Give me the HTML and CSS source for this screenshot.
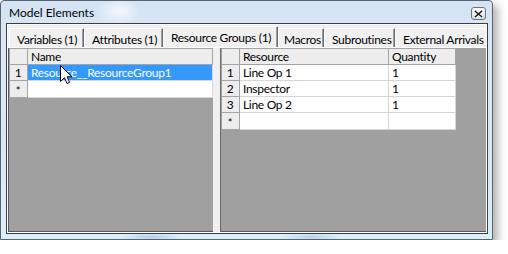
FILE: index.html
```html
<!DOCTYPE html>
<html>
<head>
<meta charset="utf-8">
<link rel="stylesheet" href="styles.css">
</head>
<body>
<div class="window">
  <div class="titlebar">
    <span class="title">Model Elements</span>
    <span class="close"><svg width="9" height="8" viewBox="0 0 9 8"><path d="M1.5 1.5 L7.5 6.5 M7.5 1.5 L1.5 6.5" stroke="#fff" stroke-width="3.4" stroke-linecap="square"/><path d="M1.5 1.5 L7.5 6.5 M7.5 1.5 L1.5 6.5" stroke="#222" stroke-width="1.6" stroke-linecap="square"/></svg></span>
  </div>
  <div class="client">
    <div class="frame">
      <div class="tabs">
        <div class="tab t1">Variables (1)</div>
        <div class="tab t2">Attributes (1)</div>
        <div class="tab t3 active">Resource Groups (1)</div>
        <div class="tab t4">Macros</div>
        <div class="tab t5">Subroutines</div>
        <div class="tab t6">External Arrivals</div>
      </div>
      <div class="panes">
        <div class="pane left">
          <table class="grid">
            <colgroup><col class="c-rh-l"><col></colgroup>
            <tr><th class="rh"></th><th>Name</th></tr>
            <tr><td class="rh">1</td><td class="sel">Resource__ResourceGroup1</td></tr>
            <tr><td class="rh star">*</td><td></td></tr>
          </table>
        </div>
        <div class="splitter"></div>
        <div class="pane right">
          <table class="grid gridr">
            <colgroup><col class="c-rh-r"><col class="c-res"><col class="c-qty"></colgroup>
            <tr><th class="rh"></th><th>Resource</th><th>Quantity</th></tr>
            <tr><td class="rh">1</td><td>Line Op 1</td><td>1</td></tr>
            <tr><td class="rh">2</td><td>Inspector</td><td>1</td></tr>
            <tr><td class="rh">3</td><td>Line Op 2</td><td>1</td></tr>
            <tr><td class="rh star">*</td><td></td><td></td></tr>
          </table>
        </div>
      </div>
    </div>
  </div>
  <svg class="cursor" width="13" height="20" viewBox="0 0 13 20"><path d="M0.5 0.5 L0.5 16.5 L4.5 12.8 L7 18.5 L9.6 17.4 L7.2 11.8 L12 11.8 Z" fill="#fff" stroke="#000" stroke-width="1" stroke-linejoin="miter"/></svg>
</div>
</body>
</html>
```

FILE: styles.css
```css
* { box-sizing: border-box; }
body {
  margin: 0;
  background: #fff;
  font-family: "Lato", "Liberation Sans", sans-serif;
  font-size: 12px;
  color: #000;
}
.window {
  position: relative;
  width: 493px;
  height: 240px;
  border: 1px solid #5c636b;
  border-radius: 4px 4px 0 0;
  background:
    radial-gradient(ellipse 22px 14px at 118px 10px, rgba(255, 255, 255, 0.75), rgba(255, 255, 255, 0) 100%),
    radial-gradient(ellipse 30px 4px at 150px 236px, rgba(150, 180, 220, 0.6), rgba(150, 180, 220, 0) 100%),
    radial-gradient(ellipse 30px 4px at 310px 236px, rgba(150, 180, 220, 0.5), rgba(150, 180, 220, 0) 100%),
    linear-gradient(180deg, #d3e3f3 0%, #dbe9f6 20%, #d6e8f5 60%, #d9f0fb 100%);
  box-shadow: 5px 5px 8px rgba(0, 0, 0, 0.3);
  display: flex;
  flex-direction: column;
}
.titlebar {
  height: 22px;
  display: flex;
  align-items: flex-start;
  padding: 0 6px 0 8px;
}
.title {
  margin-top: 4px;
  font-size: 12px;
  color: #000;
}
.close {
  margin-left: auto;
  margin-top: 6px;
  width: 15px;
  height: 13px;
  border: 1px solid #6b7580;
  border-radius: 3px;
  background: linear-gradient(180deg, #fbfcfd 0%, #e7edf3 50%, #d6dee7 100%);
  display: flex;
  align-items: center;
  justify-content: center;
}
.client {
  margin: 0 4px 0 5px;
  height: 211px;
  border: 1px solid #3a3f45;
  background: #f0f0f0;
}
.frame {
  height: 100%;
  border: 1px solid #fff;
  display: flex;
  flex-direction: column;
}
.tabs {
  height: 22px;
  display: flex;
  align-items: flex-end;
  padding-left: 1px;
  overflow: hidden;
  letter-spacing: -0.3px;
}
.tab {
  flex: none;
  height: 19px;
  padding: 3px 0 0 7px;
  border-top: 1px solid #fff;
  border-left: 1px solid #fff;
  border-right: 1px solid #696969;
  box-shadow: inset -1px 0 0 #a0a0a0;
  background: #f0f0f0;
  white-space: nowrap;
}
.tab.active {
  height: 21px;
  padding-top: 3px;
}
.t1 { width: 75px; }
.t2 { width: 79px; }
.t3 { width: 115px; }
.t4 { width: 46px; padding-left: 5px; }
.t5 { width: 71px; }
.t6 { width: 96px; border-right: none; box-shadow: none; }
.panes {
  flex: 1;
  display: flex;
  border-top: 1px solid #fff;
}
.pane {
  background: #a0a0a0;
}
.left {
  width: 205px;
  border-left: 1px solid #5a5a5a;
  border-bottom: 1px solid #5a5a5a;
}
.splitter {
  width: 8px;
  background: #f0f0f0;
  border-right: 1px solid #6a6a6a;
}
.right {
  flex: 1;
  border-bottom: 1px solid #5a5a5a;
}
.grid {
  border-collapse: collapse;
  table-layout: fixed;
  width: 100%;
  letter-spacing: -0.3px;
}
.gridr {
  width: 234px;
}
.c-rh-l { width: 18px; }
.c-rh-r { width: 18px; }
.c-res { width: 149px; }
.c-qty { width: 67px; }
.grid th, .grid td {
  height: 16px;
  padding: 0 0 0 3px;
  font-weight: normal;
  text-align: left;
  white-space: nowrap;
  overflow: hidden;
  line-height: 15px;
  border: 1px solid #d7d7d7;
  background: #fff;
}
.grid th {
  background: #ededed;
  border: 1px solid #a4a4a4;
}
.grid td.rh, .grid th.rh {
  background: #ededed;
  border: 1px solid #a4a4a4;
  text-align: center;
  padding: 0 1px 0 0;
}
.grid td.rh.star {
  font-size: 11px;
  line-height: 13px;
  padding-top: 3px;
  vertical-align: middle;
}
.grid td.sel {
  background: #3399ff;
  color: #fff;
}
.cursor {
  position: absolute;
  left: 59px;
  top: 64px;
}
```
